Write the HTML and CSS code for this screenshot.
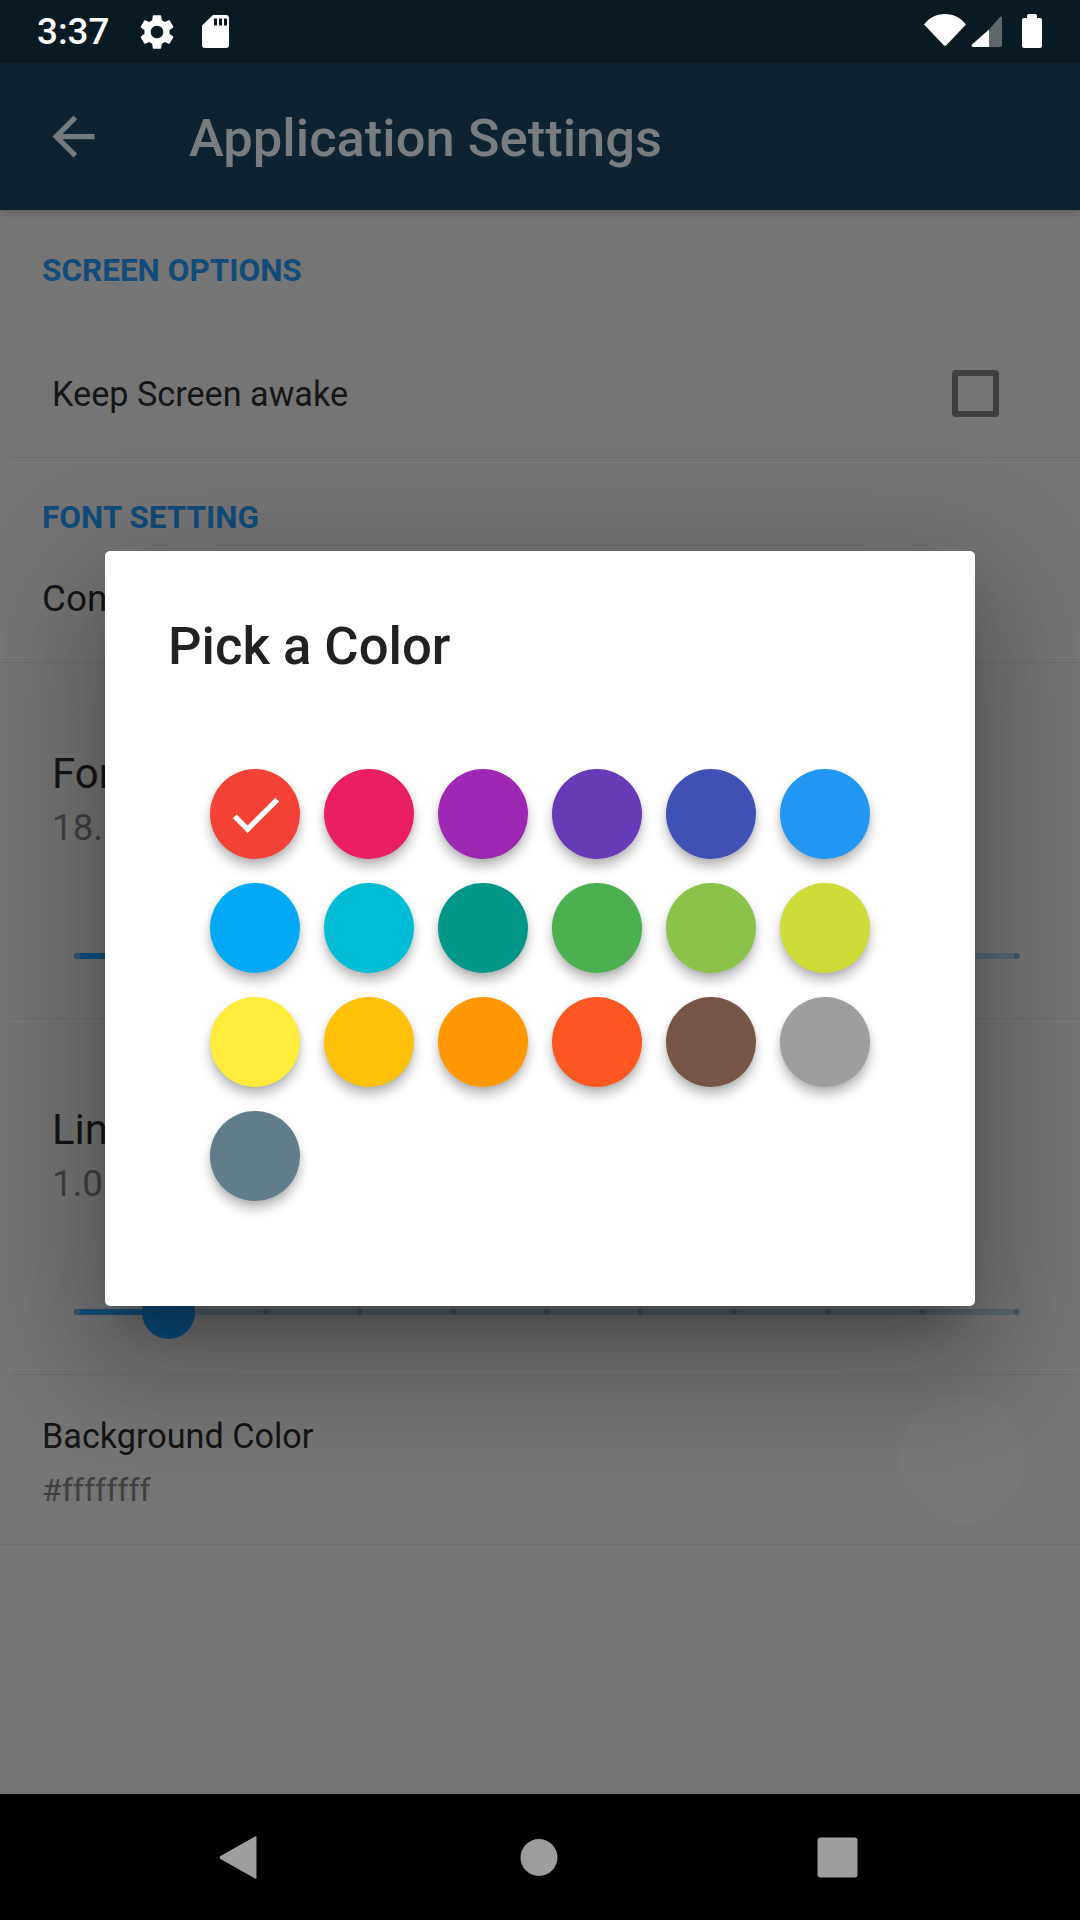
FILE: index.html
```html
<!DOCTYPE html>
<html lang="en">
<head>
<meta charset="utf-8">
<title>Application Settings</title>
<link rel="stylesheet" href="styles.css">
</head>
<body>
<div class="screen">
  <header class="status">
    <span class="time">3:37</span>
    <svg class="ic-gear" viewBox="0 0 24 24"><path d="M19.14 12.94c.04-.3.06-.61.06-.94 0-.32-.02-.64-.07-.94l2.03-1.58c.18-.14.23-.41.12-.61l-1.92-3.32c-.12-.22-.37-.29-.59-.22l-2.39.96c-.5-.38-1.03-.7-1.62-.94l-.36-2.54c-.04-.24-.24-.41-.48-.41h-3.84c-.24 0-.43.17-.47.41l-.36 2.54c-.59.24-1.13.57-1.62.94l-2.39-.96c-.22-.08-.47 0-.59.22L2.74 8.87c-.12.21-.08.47.12.61l2.03 1.58c-.05.3-.09.63-.09.94s.02.64.07.94l-2.03 1.58c-.18.14-.23.41-.12.61l1.92 3.32c.12.22.37.29.59.22l2.39-.96c.5.38 1.03.7 1.62.94l.36 2.54c.05.24.24.41.48.41h3.84c.24 0 .44-.17.47-.41l.36-2.54c.59-.24 1.13-.56 1.62-.94l2.39.96c.22.08.47 0 .59-.22l1.92-3.32c.12-.22.07-.47-.12-.61l-2.01-1.58zM12 15.6c-1.98 0-3.6-1.62-3.6-3.6s1.62-3.6 3.6-3.6 3.6 1.62 3.6 3.6-1.62 3.6-3.6 3.6z"/></svg>
    <svg class="ic-sd" viewBox="0 0 27 33"><path fill-rule="evenodd" d="M11 0h13a3 3 0 0 1 3 3v27a3 3 0 0 1-3 3H3a3 3 0 0 1-3-3V10.500zM12 3.500v7h3v-7zM17 3.500v7h3v-7zM22 3.500v7h3v-7z"/></svg>
    <span class="status-right">
      <svg class="ic-wifi" viewBox="0 0 42 32"><path d="M0 10.500C5 4 12.500 0 21 0s16 4 21 10.500L22.500 31a2 2 0 0 1-3 0z"/></svg>
      <svg class="ic-signal" viewBox="0 0 31 31"><path class="signal-off" d="M18 13.500 29 1a1.100 1.100 0 0 1 2 .8V29a2 2 0 0 1-2 2H18z"/><path d="M18 13.500V31H2a1.500 1.500 0 0 1-1-2.600z"/></svg>
      <svg class="ic-battery" viewBox="0 0 20 34"><path d="M5 4V1.500A1.500 1.500 0 0 1 6.500 0h7A1.500 1.500 0 0 1 15 1.500V4h3a2 2 0 0 1 2 2v26a2 2 0 0 1-2 2H2a2 2 0 0 1-2-2V6a2 2 0 0 1 2-2z"/></svg>
    </span>
  </header>

  <div class="app">
    <div class="appbar">
      <svg class="ic-back" viewBox="0 0 24 24"><path d="M20 11H7.830l5.590-5.590L12 4l-8 8 8 8 1.410-1.410L7.830 13H20v-2z"/></svg>
      <h1 class="appbar-title">Application Settings</h1>
    </div>

    <main class="list">
      <h2 class="section section-first">SCREEN OPTIONS</h2>
      <div class="row-keep">
        <span class="label">Keep Screen awake</span>
        <span class="checkbox"></span>
      </div>

      <h2 class="section section-font">FONT SETTING</h2>
      <div class="row-content"><span class="label-large">Content Font</span></div>

      <section class="slider-row">
        <div class="slider-title">Font Size</div>
        <div class="slider-value">18.0</div>
        <div class="slider">
          <div class="fill" style="width:47%"></div>
          <div class="ticks"><i></i><i></i><i></i><i></i><i></i><i></i><i></i><i></i><i></i><i></i><i></i></div>
          <div class="thumb" style="left:47%"></div>
        </div>
      </section>

      <section class="slider-row">
        <div class="slider-title">Line Height</div>
        <div class="slider-value">1.0</div>
        <div class="slider">
          <div class="fill" style="width:10%"></div>
          <div class="ticks"><i></i><i></i><i></i><i></i><i></i><i></i><i></i><i></i><i></i><i></i><i></i></div>
          <div class="thumb" style="left:10%"></div>
        </div>
      </section>

      <div class="row-color">
        <div class="color-text">
          <div class="label">Background Color</div>
          <div class="color-value">#ffffffff</div>
        </div>
        <div class="swatch"></div>
      </div>
    </main>

    <div class="overlay">
      <div class="dialog">
        <h3 class="dialog-title">Pick a Color</h3>
        <div class="palette">
          <div class="dot c1"><svg viewBox="0 0 24 24"><path d="M9 16.170 4.830 12l-1.420 1.410L9 19 21 7l-1.410-1.410z"/></svg></div>
          <div class="dot c2"></div>
          <div class="dot c3"></div>
          <div class="dot c4"></div>
          <div class="dot c5"></div>
          <div class="dot c6"></div>
          <div class="dot c7"></div>
          <div class="dot c8"></div>
          <div class="dot c9"></div>
          <div class="dot c10"></div>
          <div class="dot c11"></div>
          <div class="dot c12"></div>
          <div class="dot c13"></div>
          <div class="dot c14"></div>
          <div class="dot c15"></div>
          <div class="dot c16"></div>
          <div class="dot c17"></div>
          <div class="dot c18"></div>
          <div class="dot c19"></div>
        </div>
      </div>
    </div>
  </div>

  <footer class="nav">
    <svg viewBox="0 0 63 63"><path d="M13.500 30 48 10.500c1-.5 1.500 0 1.500 1v40c0 1-.5 1.500-1.500 1L13.500 33a2 2 0 0 1 0-3z"/></svg>
    <svg viewBox="0 0 63 63"><circle cx="32" cy="31.500" r="18.500"/></svg>
    <svg viewBox="0 0 63 63"><rect x="10.500" y="11.500" width="40" height="40" rx="3"/></svg>
  </footer>
</div>
</body>
</html>
```
FILE: styles.css
```css
* { box-sizing: border-box; }
html, body { margin: 0; padding: 0; }
body { font-family: Roboto, "Noto Sans", sans-serif; background: #000; }
h1, h2, h3 { margin: 0; }

.screen { width: 1080px; height: 1920px; display: flex; flex-direction: column; overflow: hidden; }

/* status bar */
.status { height: 63px; flex: none; background: #0a1a22; display: flex; align-items: center; padding-left: 37px; fill: #fff; }
.time { color: #fff; font-size: 36.75px; font-weight: 500; width: 94px; line-height: 63px; }
.ic-gear { width: 42px; height: 42px; margin-left: 5px; }
.ic-sd { width: 27px; height: 33px; margin-left: 24px; }
.status-right { margin-left: auto; display: flex; align-items: flex-start; height: 63px; }
.ic-wifi { width: 42px; height: 32px; margin-top: 14px; }
.ic-signal { width: 31px; height: 31px; margin: 16px 0 0 5px; }
.signal-off { fill: #5e676c; }
.ic-battery { width: 20px; height: 34px; margin: 14px 38px 0 20px; }

/* app */
.app { flex: 1; position: relative; background: #757575; }
.appbar { height: 147px; background: #0e2331; display: flex; align-items: center; padding-left: 41.5px; box-shadow: 0 3px 6px rgba(0,0,0,.18); position: relative; }
.ic-back { width: 63px; height: 63px; fill: #767b7e; }
.appbar-title { color: #7a7d80; font-size: 52.5px; font-weight: 500; margin: 3px 0 0 84.5px; }

.section { font-size: 31.5px; line-height: 40px; font-weight: 700; color: #104b7a; padding-left: 42px; }
.section-first { padding-top: 41px; }
.section-font { padding-top: 39.5px; }
.label { font-size: 34.2px; line-height: 40px; color: #151515; }
.label-large { display: block; font-size: 36.75px; line-height: 40px; color: #151515; }

.row-keep { height: 167px; padding: 40px 81px 0 42px; margin-left: 10px; display: flex; align-items: center; justify-content: space-between; border-bottom: 1px solid #6c6c6c; }
.checkbox { width: 47px; height: 47px; margin-top: -2px; border: 6px solid #3f3f3f; border-radius: 4px; }

.row-content { padding: 41.5px 0 43px 42px; border-bottom: 1px solid #6c6c6c; }

.slider-row { margin-left: 10px; padding: 86px 0 59px 42px; border-bottom: 1px solid #6c6c6c; }
.slider-title { font-size: 42px; line-height: 50px; color: #151515; }
.slider-value { font-size: 36.75px; line-height: 40px; color: #404040; margin-top: 9px; }
.slider { position: relative; height: 6px; margin: 105px 60px 0 22px; background: #566773; border-radius: 3px; }
.fill { position: absolute; left: 0; top: 0; bottom: 0; background: #10527f; border-radius: 3px; }
.ticks { position: absolute; inset: 0; display: flex; justify-content: space-between; padding: 0 1px; }
.ticks i { display: block; width: 5px; height: 6px; background: #40566a; border-radius: 50%; }
.thumb { position: absolute; top: -23.500px; width: 53px; height: 53px; margin-left: -26.500px; border-radius: 50%; background: #0d4f80; }

.row-color { display: flex; align-items: center; justify-content: space-between; padding: 0 54px 0 42px; border-bottom: 1px solid #6c6c6c; }
.color-text { padding: 41px 0 34px; }
.color-text .label { display: block; }
.color-value { font-size: 32px; line-height: 40px; color: #404040; margin-top: 14px; }
.swatch { width: 126px; height: 128px; border-radius: 50%; background: #777; }

/* dialog */
.overlay { position: absolute; inset: 0; display: flex; justify-content: center; align-items: flex-start; padding-top: 488px; }
.dialog { width: 870px; height: 755px; background: #fff; border-radius: 5px; padding: 64px 105px 0; box-shadow: 0 29px 39px -18px rgba(0,0,0,.24), 0 63px 100px 8px rgba(0,0,0,.17), 0 24px 121px 21px rgba(0,0,0,.14); }
.dialog-title { font-size: 52.6px; line-height: 62px; font-weight: 500; color: #212121; margin-left: -42px; }
.palette { display: flex; flex-wrap: wrap; gap: 24px; margin-top: 92px; }
.dot { width: 90px; height: 90px; border-radius: 50%; box-shadow: 0 8px 12px rgba(0,0,0,.26), 0 2px 4px rgba(0,0,0,.08); display: flex; align-items: center; justify-content: center; }
.dot svg { width: 63px; height: 63px; fill: #fff; }
.c1 { background: #f44336; } .c2 { background: #e91e63; } .c3 { background: #9c27b0; }
.c4 { background: #673ab7; } .c5 { background: #3f51b5; } .c6 { background: #2196f3; }
.c7 { background: #03a9f4; } .c8 { background: #00bcd4; } .c9 { background: #009688; }
.c10 { background: #4caf50; } .c11 { background: #8bc34a; } .c12 { background: #cddc39; }
.c13 { background: #ffeb3b; } .c14 { background: #ffc107; } .c15 { background: #ff9800; }
.c16 { background: #ff5722; } .c17 { background: #795548; } .c18 { background: #9e9e9e; }
.c19 { background: #607d8b; }

/* nav */
.nav { height: 126px; flex: none; background: #000; display: flex; align-items: center; gap: 237px; padding-left: 207px; }
.nav svg { width: 63px; height: 63px; fill: #9e9e9e; }
```
